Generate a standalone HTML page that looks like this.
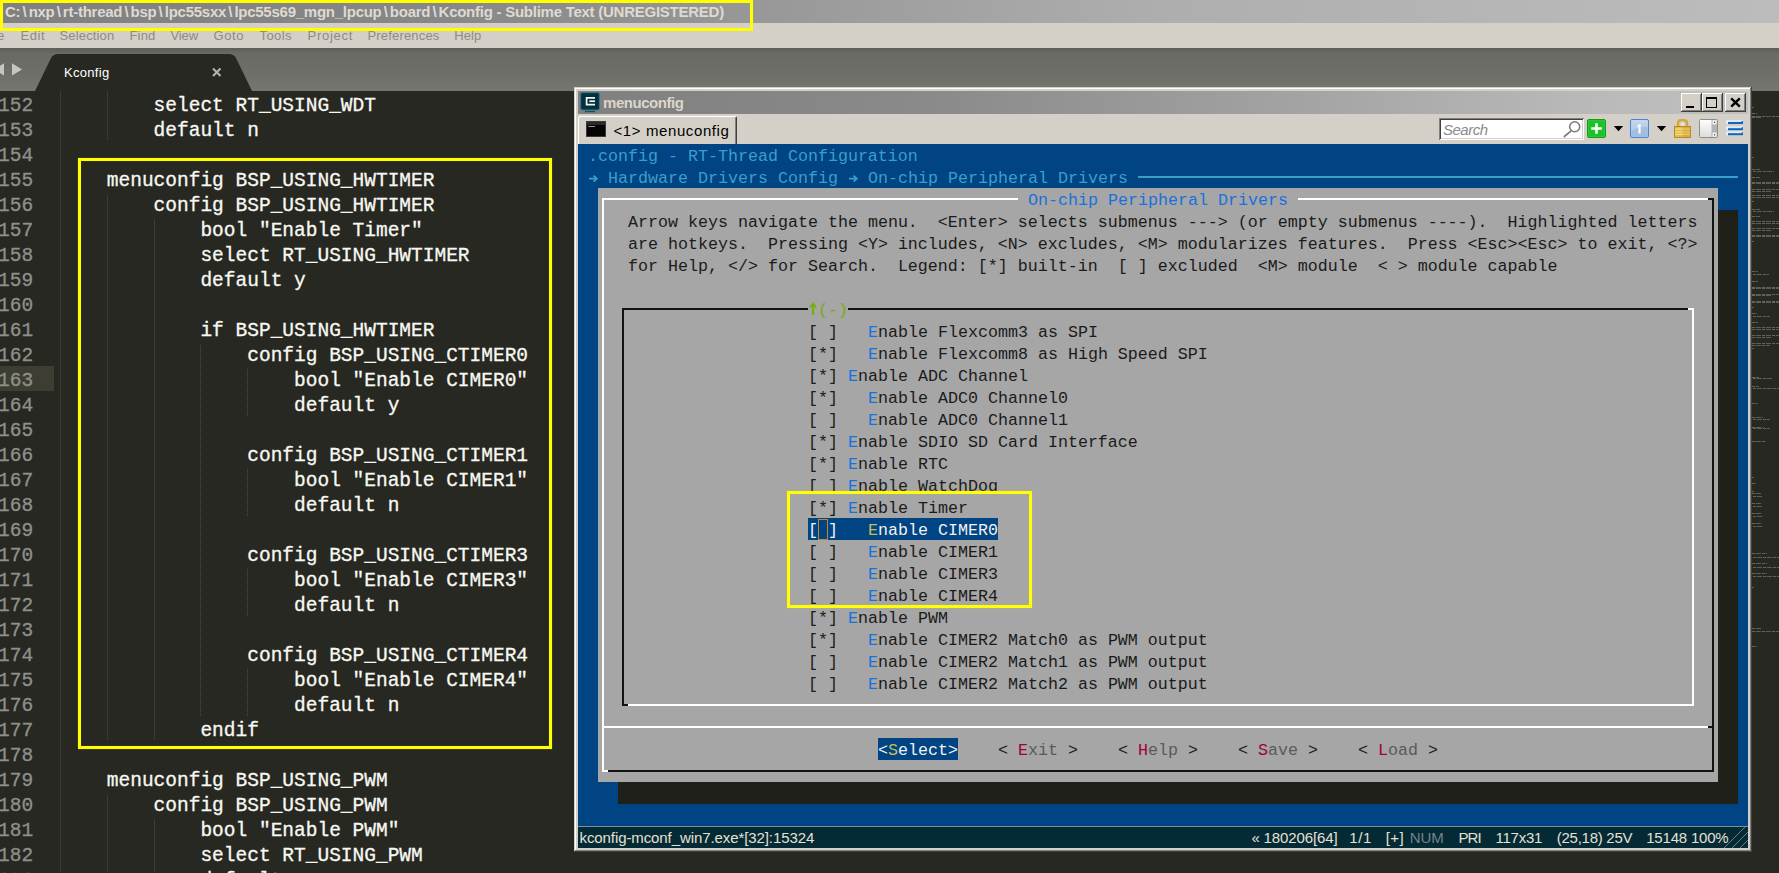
<!DOCTYPE html>
<html><head><meta charset="utf-8"><title>Kconfig</title>
<style>
*{margin:0;padding:0;box-sizing:border-box}
html,body{width:1779px;height:873px;overflow:hidden;background:#272822}
body{position:relative;font-family:"Liberation Sans",sans-serif}
.a{position:absolute}
#title{left:0;top:0;width:1779px;height:23px;background:linear-gradient(90deg,#808080 0%,#878787 25%,#9a9a9a 45%,#aeaeae 65%,#bcbcbc 100%)}
#menubar{left:0;top:23px;width:1779px;height:25px;background:#d4d0c8}
#menubar span{position:absolute;top:5px;font:13px "Liberation Sans",sans-serif;color:#8c8a84;white-space:pre}
#tabbar{left:0;top:48px;width:1779px;height:43px;background:linear-gradient(180deg,#5d5e58 0%,#696a64 12%,#6e6f69 60%,#757670 100%)}
#editor{left:0;top:91px;width:1779px;height:782px;background:#272822}
.ln{position:absolute;left:-2px;width:60px;height:25px;font:19.5px/25px "Liberation Mono",monospace;color:#8f908a;white-space:pre;-webkit-text-stroke:0.3px #8f908a}
.cl{position:absolute;left:60px;height:25px;font:19.5px/25px "Liberation Mono",monospace;color:#f8f8f2;white-space:pre;-webkit-text-stroke:0.3px #f8f8f2}
.ig{position:absolute;width:1px;background-image:linear-gradient(180deg,#4b4c45 50%,transparent 50%);background-size:1px 2px}
.mm{position:absolute;height:1px;background:repeating-linear-gradient(90deg,rgba(215,215,205,.34) 0,rgba(215,215,205,.34) 3px,rgba(215,215,205,.08) 3px,rgba(215,215,205,.08) 4px,rgba(215,215,205,.3) 4px,rgba(215,215,205,.3) 9px,transparent 9px,transparent 10px)}
.yb{position:absolute;border:3.4px solid #ffff00;box-shadow:0 0 0.7px #e8e800, inset 0 0 0.7px #e8e800}
#term{left:578px;top:144px;width:1170px;height:682px;background:#004484;overflow:hidden}
.t{position:absolute;height:22px;font:16.664px/22px "Liberation Mono",monospace;white-space:pre;color:#1b1b1b}
.c1{color:#3a9fc8}
.bl{color:#1872dc}
.gr{color:#72b008}
.rd{color:#a2003a}
.dg{color:#5a5a5a}
.wh{color:#f2f2f2}
.yl{color:#c4bc58}
#cstatus{left:578px;top:826px;width:1170px;height:22px;background:#042a35;border-top:1px solid #7d8d9c}
#cstatus span{position:absolute;top:2px;font:15px "Liberation Sans",sans-serif;color:#e6e0d4;white-space:pre}
</style></head>
<body>
<div id="title" class="a"><span class="a" style="left:5px;top:3px;font:bold 15px 'Liberation Sans',sans-serif;color:#dedad2;white-space:pre;letter-spacing:-0.254px">C:<span style="margin:0 2.20px">\</span>nxp<span style="margin:0 2.20px">\</span>rt-thread<span style="margin:0 2.20px">\</span>bsp<span style="margin:0 2.20px">\</span>lpc55sxx<span style="margin:0 2.20px">\</span>lpc55s69_mgn_lpcup<span style="margin:0 2.20px">\</span>board<span style="margin:0 2.20px">\</span>Kconfig - Sublime Text (UNREGISTERED)</span></div>
<div id="menubar" class="a"><span style="left:-3.0px">e</span><span style="left:20.6px;letter-spacing:0.500px">Edit</span><span style="left:59.5px;letter-spacing:0.158px">Selection</span><span style="left:129.5px;letter-spacing:0.177px">Find</span><span style="left:170.5px;letter-spacing:-0.111px">View</span><span style="left:213.5px;letter-spacing:0.579px">Goto</span><span style="left:259.5px;letter-spacing:0.430px">Tools</span><span style="left:307.5px;letter-spacing:0.720px">Project</span><span style="left:367.5px;letter-spacing:0.173px">Preferences</span><span style="left:454.3px;letter-spacing:0.091px">Help</span></div>
<div class="yb" style="left:0;top:0;width:753px;height:30.5px"></div>
<div id="tabbar" class="a"><svg class="a" style="left:0;top:0" width="300" height="43" viewBox="0 0 300 43"><path d="M35 43 L50.8 10.5 Q52.8 6 58.3 6 L228.7 6 Q234.2 6 236.2 10.5 L252 43 Z" fill="#272822"/><path d="M4 15.2 L4 27.6 L-6 21.4 Z" fill="#c6c6c2"/><path d="M12 15.2 L22 21.4 L12 27.6 Z" fill="#c6c6c2"/><path d="M213 20.5 L220.5 28 M220.5 20.5 L213 28" stroke="#b4b4b0" stroke-width="2.1" fill="none"/></svg><span class="a" style="left:64px;top:16.5px;font:13px 'Liberation Sans',sans-serif;color:#ffffff;letter-spacing:0.305px">Kconfig</span></div>
<div id="editor" class="a"><div class="a" style="left:0;top:275px;width:54px;height:25px;background:#3e3d32"></div><div class="ig" style="left:60px;top:0px;height:25px;background-position:0 0px"></div><div class="ig" style="left:107px;top:0px;height:25px;background-position:0 0px"></div><div class="ig" style="left:60px;top:25px;height:25px;background-position:0 -1px"></div><div class="ig" style="left:107px;top:25px;height:25px;background-position:0 -1px"></div><div class="ig" style="left:60px;top:50px;height:25px;background-position:0 0px"></div><div class="ig" style="left:60px;top:75px;height:25px;background-position:0 -1px"></div><div class="ig" style="left:60px;top:100px;height:25px;background-position:0 0px"></div><div class="ig" style="left:107px;top:103px;height:22px;background-position:0 -1px"></div><div class="ig" style="left:60px;top:125px;height:25px;background-position:0 -1px"></div><div class="ig" style="left:107px;top:125px;height:25px;background-position:0 -1px"></div><div class="ig" style="left:154px;top:128px;height:22px;background-position:0 0px"></div><div class="ig" style="left:60px;top:150px;height:25px;background-position:0 0px"></div><div class="ig" style="left:107px;top:150px;height:25px;background-position:0 0px"></div><div class="ig" style="left:154px;top:150px;height:25px;background-position:0 0px"></div><div class="ig" style="left:60px;top:175px;height:25px;background-position:0 -1px"></div><div class="ig" style="left:107px;top:175px;height:25px;background-position:0 -1px"></div><div class="ig" style="left:154px;top:175px;height:25px;background-position:0 -1px"></div><div class="ig" style="left:60px;top:200px;height:25px;background-position:0 0px"></div><div class="ig" style="left:107px;top:200px;height:25px;background-position:0 0px"></div><div class="ig" style="left:154px;top:200px;height:25px;background-position:0 0px"></div><div class="ig" style="left:60px;top:225px;height:25px;background-position:0 -1px"></div><div class="ig" style="left:107px;top:225px;height:25px;background-position:0 -1px"></div><div class="ig" style="left:154px;top:225px;height:25px;background-position:0 -1px"></div><div class="ig" style="left:60px;top:250px;height:25px;background-position:0 0px"></div><div class="ig" style="left:107px;top:250px;height:25px;background-position:0 0px"></div><div class="ig" style="left:154px;top:250px;height:25px;background-position:0 0px"></div><div class="ig" style="left:200px;top:253px;height:22px;background-position:0 -1px"></div><div class="ig" style="left:60px;top:275px;height:25px;background-position:0 -1px"></div><div class="ig" style="left:107px;top:275px;height:25px;background-position:0 -1px"></div><div class="ig" style="left:154px;top:275px;height:25px;background-position:0 -1px"></div><div class="ig" style="left:200px;top:275px;height:25px;background-position:0 -1px"></div><div class="ig" style="left:247px;top:278px;height:22px;background-position:0 0px"></div><div class="ig" style="left:60px;top:300px;height:25px;background-position:0 0px"></div><div class="ig" style="left:107px;top:300px;height:25px;background-position:0 0px"></div><div class="ig" style="left:154px;top:300px;height:25px;background-position:0 0px"></div><div class="ig" style="left:200px;top:300px;height:25px;background-position:0 0px"></div><div class="ig" style="left:247px;top:300px;height:25px;background-position:0 0px"></div><div class="ig" style="left:60px;top:325px;height:25px;background-position:0 -1px"></div><div class="ig" style="left:107px;top:325px;height:25px;background-position:0 -1px"></div><div class="ig" style="left:154px;top:325px;height:25px;background-position:0 -1px"></div><div class="ig" style="left:200px;top:325px;height:25px;background-position:0 -1px"></div><div class="ig" style="left:60px;top:350px;height:25px;background-position:0 0px"></div><div class="ig" style="left:107px;top:350px;height:25px;background-position:0 0px"></div><div class="ig" style="left:154px;top:350px;height:25px;background-position:0 0px"></div><div class="ig" style="left:200px;top:350px;height:25px;background-position:0 0px"></div><div class="ig" style="left:60px;top:375px;height:25px;background-position:0 -1px"></div><div class="ig" style="left:107px;top:375px;height:25px;background-position:0 -1px"></div><div class="ig" style="left:154px;top:375px;height:25px;background-position:0 -1px"></div><div class="ig" style="left:200px;top:375px;height:25px;background-position:0 -1px"></div><div class="ig" style="left:247px;top:378px;height:22px;background-position:0 0px"></div><div class="ig" style="left:60px;top:400px;height:25px;background-position:0 0px"></div><div class="ig" style="left:107px;top:400px;height:25px;background-position:0 0px"></div><div class="ig" style="left:154px;top:400px;height:25px;background-position:0 0px"></div><div class="ig" style="left:200px;top:400px;height:25px;background-position:0 0px"></div><div class="ig" style="left:247px;top:400px;height:25px;background-position:0 0px"></div><div class="ig" style="left:60px;top:425px;height:25px;background-position:0 -1px"></div><div class="ig" style="left:107px;top:425px;height:25px;background-position:0 -1px"></div><div class="ig" style="left:154px;top:425px;height:25px;background-position:0 -1px"></div><div class="ig" style="left:200px;top:425px;height:25px;background-position:0 -1px"></div><div class="ig" style="left:60px;top:450px;height:25px;background-position:0 0px"></div><div class="ig" style="left:107px;top:450px;height:25px;background-position:0 0px"></div><div class="ig" style="left:154px;top:450px;height:25px;background-position:0 0px"></div><div class="ig" style="left:200px;top:450px;height:25px;background-position:0 0px"></div><div class="ig" style="left:60px;top:475px;height:25px;background-position:0 -1px"></div><div class="ig" style="left:107px;top:475px;height:25px;background-position:0 -1px"></div><div class="ig" style="left:154px;top:475px;height:25px;background-position:0 -1px"></div><div class="ig" style="left:200px;top:475px;height:25px;background-position:0 -1px"></div><div class="ig" style="left:247px;top:478px;height:22px;background-position:0 0px"></div><div class="ig" style="left:60px;top:500px;height:25px;background-position:0 0px"></div><div class="ig" style="left:107px;top:500px;height:25px;background-position:0 0px"></div><div class="ig" style="left:154px;top:500px;height:25px;background-position:0 0px"></div><div class="ig" style="left:200px;top:500px;height:25px;background-position:0 0px"></div><div class="ig" style="left:247px;top:500px;height:25px;background-position:0 0px"></div><div class="ig" style="left:60px;top:525px;height:25px;background-position:0 -1px"></div><div class="ig" style="left:107px;top:525px;height:25px;background-position:0 -1px"></div><div class="ig" style="left:154px;top:525px;height:25px;background-position:0 -1px"></div><div class="ig" style="left:200px;top:525px;height:25px;background-position:0 -1px"></div><div class="ig" style="left:60px;top:550px;height:25px;background-position:0 0px"></div><div class="ig" style="left:107px;top:550px;height:25px;background-position:0 0px"></div><div class="ig" style="left:154px;top:550px;height:25px;background-position:0 0px"></div><div class="ig" style="left:200px;top:550px;height:25px;background-position:0 0px"></div><div class="ig" style="left:60px;top:575px;height:25px;background-position:0 -1px"></div><div class="ig" style="left:107px;top:575px;height:25px;background-position:0 -1px"></div><div class="ig" style="left:154px;top:575px;height:25px;background-position:0 -1px"></div><div class="ig" style="left:200px;top:575px;height:25px;background-position:0 -1px"></div><div class="ig" style="left:247px;top:578px;height:22px;background-position:0 0px"></div><div class="ig" style="left:60px;top:600px;height:25px;background-position:0 0px"></div><div class="ig" style="left:107px;top:600px;height:25px;background-position:0 0px"></div><div class="ig" style="left:154px;top:600px;height:25px;background-position:0 0px"></div><div class="ig" style="left:200px;top:600px;height:25px;background-position:0 0px"></div><div class="ig" style="left:247px;top:600px;height:25px;background-position:0 0px"></div><div class="ig" style="left:60px;top:625px;height:25px;background-position:0 -1px"></div><div class="ig" style="left:107px;top:625px;height:25px;background-position:0 -1px"></div><div class="ig" style="left:154px;top:625px;height:25px;background-position:0 -1px"></div><div class="ig" style="left:60px;top:650px;height:25px;background-position:0 0px"></div><div class="ig" style="left:60px;top:675px;height:25px;background-position:0 -1px"></div><div class="ig" style="left:60px;top:700px;height:25px;background-position:0 0px"></div><div class="ig" style="left:107px;top:703px;height:22px;background-position:0 -1px"></div><div class="ig" style="left:60px;top:725px;height:25px;background-position:0 -1px"></div><div class="ig" style="left:107px;top:725px;height:25px;background-position:0 -1px"></div><div class="ig" style="left:154px;top:728px;height:22px;background-position:0 0px"></div><div class="ig" style="left:60px;top:750px;height:25px;background-position:0 0px"></div><div class="ig" style="left:107px;top:750px;height:25px;background-position:0 0px"></div><div class="ig" style="left:154px;top:750px;height:25px;background-position:0 0px"></div><div class="ig" style="left:60px;top:775px;height:25px;background-position:0 -1px"></div><div class="ig" style="left:107px;top:775px;height:25px;background-position:0 -1px"></div><div class="ig" style="left:154px;top:775px;height:25px;background-position:0 -1px"></div><div class="ln" style="top:3px">152</div><div class="cl" style="top:3px">        select RT_USING_WDT</div><div class="ln" style="top:28px">153</div><div class="cl" style="top:28px">        default n</div><div class="ln" style="top:53px">154</div><div class="ln" style="top:78px">155</div><div class="cl" style="top:78px">    menuconfig BSP_USING_HWTIMER</div><div class="ln" style="top:103px">156</div><div class="cl" style="top:103px">        config BSP_USING_HWTIMER</div><div class="ln" style="top:128px">157</div><div class="cl" style="top:128px">            bool "Enable Timer"</div><div class="ln" style="top:153px">158</div><div class="cl" style="top:153px">            select RT_USING_HWTIMER</div><div class="ln" style="top:178px">159</div><div class="cl" style="top:178px">            default y</div><div class="ln" style="top:203px">160</div><div class="ln" style="top:228px">161</div><div class="cl" style="top:228px">            if BSP_USING_HWTIMER</div><div class="ln" style="top:253px">162</div><div class="cl" style="top:253px">                config BSP_USING_CTIMER0</div><div class="ln" style="top:278px">163</div><div class="cl" style="top:278px">                    bool "Enable CIMER0"</div><div class="ln" style="top:303px">164</div><div class="cl" style="top:303px">                    default y</div><div class="ln" style="top:328px">165</div><div class="ln" style="top:353px">166</div><div class="cl" style="top:353px">                config BSP_USING_CTIMER1</div><div class="ln" style="top:378px">167</div><div class="cl" style="top:378px">                    bool "Enable CIMER1"</div><div class="ln" style="top:403px">168</div><div class="cl" style="top:403px">                    default n</div><div class="ln" style="top:428px">169</div><div class="ln" style="top:453px">170</div><div class="cl" style="top:453px">                config BSP_USING_CTIMER3</div><div class="ln" style="top:478px">171</div><div class="cl" style="top:478px">                    bool "Enable CIMER3"</div><div class="ln" style="top:503px">172</div><div class="cl" style="top:503px">                    default n</div><div class="ln" style="top:528px">173</div><div class="ln" style="top:553px">174</div><div class="cl" style="top:553px">                config BSP_USING_CTIMER4</div><div class="ln" style="top:578px">175</div><div class="cl" style="top:578px">                    bool "Enable CIMER4"</div><div class="ln" style="top:603px">176</div><div class="cl" style="top:603px">                    default n</div><div class="ln" style="top:628px">177</div><div class="cl" style="top:628px">            endif</div><div class="ln" style="top:653px">178</div><div class="ln" style="top:678px">179</div><div class="cl" style="top:678px">    menuconfig BSP_USING_PWM</div><div class="ln" style="top:703px">180</div><div class="cl" style="top:703px">        config BSP_USING_PWM</div><div class="ln" style="top:728px">181</div><div class="cl" style="top:728px">            bool "Enable PWM"</div><div class="ln" style="top:753px">182</div><div class="cl" style="top:753px">            select RT_USING_PWM</div><div class="ln" style="top:778px">183</div><div class="cl" style="top:778px">            default n</div><div class="mm" style="left:1752px;top:16px;width:2px"></div><div class="mm" style="left:1752px;top:22px;width:5px"></div><div class="mm" style="left:1752px;top:25px;width:27px"></div><div class="mm" style="left:1752px;top:26px;width:10px"></div><div class="mm" style="left:1752px;top:66px;width:2px"></div><div class="mm" style="left:1752px;top:78px;width:8px"></div><div class="mm" style="left:1753px;top:80px;width:21px"></div><div class="mm" style="left:1752px;top:86px;width:8px"></div><div class="mm" style="left:1752px;top:91px;width:27px"></div><div class="mm" style="left:1752px;top:92px;width:27px"></div><div class="mm" style="left:1752px;top:98px;width:27px"></div><div class="mm" style="left:1752px;top:100px;width:19px"></div><div class="mm" style="left:1752px;top:104px;width:27px"></div><div class="mm" style="left:1752px;top:106px;width:27px"></div><div class="mm" style="left:1752px;top:110px;width:2px"></div><div class="mm" style="left:1752px;top:118px;width:8px"></div><div class="mm" style="left:1753px;top:120px;width:21px"></div><div class="mm" style="left:1752px;top:125px;width:8px"></div><div class="mm" style="left:1752px;top:130px;width:27px"></div><div class="mm" style="left:1752px;top:132px;width:27px"></div><div class="mm" style="left:1752px;top:137px;width:27px"></div><div class="mm" style="left:1752px;top:139px;width:19px"></div><div class="mm" style="left:1752px;top:144px;width:27px"></div><div class="mm" style="left:1752px;top:145px;width:27px"></div><div class="mm" style="left:1752px;top:150px;width:2px"></div><div class="mm" style="left:1752px;top:180px;width:6px"></div><div class="mm" style="left:1753px;top:183px;width:16px"></div><div class="mm" style="left:1752px;top:190px;width:6px"></div><div class="mm" style="left:1752px;top:196px;width:27px"></div><div class="mm" style="left:1752px;top:197px;width:27px"></div><div class="mm" style="left:1752px;top:203px;width:27px"></div><div class="mm" style="left:1752px;top:204px;width:19px"></div><div class="mm" style="left:1752px;top:210px;width:27px"></div><div class="mm" style="left:1752px;top:211px;width:27px"></div><div class="mm" style="left:1752px;top:216px;width:2px"></div><div class="mm" style="left:1752px;top:222px;width:5px"></div><div class="mm" style="left:1753px;top:225px;width:17px"></div><div class="mm" style="left:1752px;top:231px;width:6px"></div><div class="mm" style="left:1752px;top:236px;width:27px"></div><div class="mm" style="left:1752px;top:238px;width:27px"></div><div class="mm" style="left:1752px;top:244px;width:27px"></div><div class="mm" style="left:1752px;top:246px;width:19px"></div><div class="mm" style="left:1752px;top:252px;width:27px"></div><div class="mm" style="left:1752px;top:254px;width:18px"></div><div class="mm" style="left:1752px;top:257px;width:2px"></div><div class="mm" style="left:1752px;top:286px;width:7px"></div><div class="mm" style="left:1753px;top:287px;width:20px"></div><div class="mm" style="left:1752px;top:295px;width:7px"></div><div class="mm" style="left:1753px;top:297px;width:26px"></div><div class="mm" style="left:1752px;top:312px;width:6px"></div><div class="mm" style="left:1752px;top:326px;width:11px"></div><div class="mm" style="left:1753px;top:328px;width:17px"></div><div class="mm" style="left:1752px;top:336px;width:11px"></div><div class="mm" style="left:1753px;top:337px;width:17px"></div><div class="mm" style="left:1752px;top:350px;width:14px"></div><div class="mm" style="left:1752px;top:386px;width:2px"></div><div class="mm" style="left:1752px;top:392px;width:4px"></div><div class="mm" style="left:1752px;top:400px;width:2px"></div><div class="mm" style="left:1752px;top:402px;width:10px"></div><div class="mm" style="left:1753px;top:405px;width:9px"></div><div class="mm" style="left:1752px;top:412px;width:10px"></div><div class="mm" style="left:1753px;top:415px;width:9px"></div><div class="mm" style="left:1752px;top:422px;width:10px"></div><div class="mm" style="left:1753px;top:425px;width:9px"></div><div class="mm" style="left:1752px;top:432px;width:10px"></div><div class="mm" style="left:1753px;top:435px;width:9px"></div><div class="mm" style="left:1752px;top:462px;width:15px"></div><div class="mm" style="left:1753px;top:466px;width:26px"></div><div class="mm" style="left:1752px;top:472px;width:15px"></div><div class="mm" style="left:1753px;top:476px;width:26px"></div><div class="mm" style="left:1752px;top:482px;width:15px"></div><div class="mm" style="left:1753px;top:485px;width:26px"></div><div class="mm" style="left:1752px;top:496px;width:2px"></div><div class="mm" style="left:1752px;top:537px;width:9px"></div><div class="mm" style="left:1752px;top:540px;width:27px"></div><div class="mm" style="left:1752px;top:555px;width:5px"></div></div>
<div class="yb" style="left:78px;top:158px;width:474.3px;height:591px"></div>
<div class="a" style="left:574px;top:87px;width:1178px;height:765px;background:#d4d0c8;box-shadow:inset -1px -1px 0 #404040, inset 1px 1px 0 #d4d0c8, inset -2px -2px 0 #808080, inset 2px 2px 0 #ffffff"></div>
<div class="a" style="left:578px;top:91px;width:1170px;height:23px;background:linear-gradient(90deg,#808080 0%,#8a8a8a 30%,#a2a2a2 60%,#b8b8b8 85%,#c0c0c0 100%)"></div>
<svg class="a" style="left:580px;top:92px" width="20" height="21" viewBox="0 0 20 21"><rect x="0.5" y="0.5" width="19" height="17.5" rx="2.2" fill="#03303e" stroke="#3a7686" stroke-width="1"/><rect x="1.6" y="1.6" width="16.8" height="15.3" rx="1.2" fill="none" stroke="#0a4252" stroke-width="0.8"/><path d="M15 5.8 L6.6 5.8 L6.6 12.6 L15 12.6" fill="none" stroke="#f6f6f2" stroke-width="1.7"/><path d="M9.4 9.2 L15 9.2" stroke="#f6f6f2" stroke-width="1.7"/><rect x="5" y="19" width="10" height="1.2" fill="#165060"/></svg>
<span class="a" style="left:603px;top:93.5px;font:bold 15px 'Liberation Sans',sans-serif;color:#dcd6ca;white-space:pre;letter-spacing:-0.450px">menuconfig</span>
<div class="a" style="left:1681px;top:93px;width:21px;height:19px;background:#d4d0c8;box-shadow:inset -1px -1px 0 #404040, inset 1px 1px 0 #ffffff, inset -2px -2px 0 #808080"></div><div class="a" style="left:1686px;top:106px;width:8px;height:2px;background:#000"></div><div class="a" style="left:1702px;top:93px;width:21px;height:19px;background:#d4d0c8;box-shadow:inset -1px -1px 0 #404040, inset 1px 1px 0 #ffffff, inset -2px -2px 0 #808080"></div><div class="a" style="left:1706px;top:97px;width:11px;height:11px;border:1px solid #000;border-top-width:2px"></div><div class="a" style="left:1725px;top:93px;width:21px;height:19px;background:#d4d0c8;box-shadow:inset -1px -1px 0 #404040, inset 1px 1px 0 #ffffff, inset -2px -2px 0 #808080"></div><svg class="a" style="left:1729px;top:96px" width="13" height="13" viewBox="0 0 13 13"><path d="M2.2 2.4 L10.8 10.6 M10.8 2.4 L2.2 10.6" stroke="#000" stroke-width="2.4" fill="none"/></svg>
<div class="a" style="left:578px;top:114px;width:1170px;height:30px;background:#d4d0c8"></div>
<div class="a" style="left:578px;top:116px;width:159px;height:28px;background:#d4d0c8;border-top:1px solid #fff;border-left:1px solid #fff;border-right:1px solid #404040;border-radius:3px 2px 0 0;box-shadow:inset -1px 0 0 #808080"></div>
<svg class="a" style="left:586px;top:121px" width="20" height="16" viewBox="0 0 20 16"><rect x="0" y="0" width="20" height="16" fill="#050505"/><rect x="0.5" y="0.5" width="19" height="15" fill="none" stroke="#3a3a3a" stroke-width="1"/><rect x="1" y="1" width="18" height="3" fill="#2a2a2a"/><path d="M2.5 5.5 L9 5.5" stroke="#9a9a9a" stroke-width="1"/></svg>
<span class="a" style="left:613.5px;top:122px;font:15px 'Liberation Sans',sans-serif;color:#000;white-space:pre;letter-spacing:0.601px">&lt;1&gt; menuconfig</span>
<div class="a" style="left:1439px;top:118px;width:145px;height:22px;background:#fff;box-shadow:inset 1px 1px 0 #808080, inset -1px -1px 0 #ffffff, inset 2px 2px 0 #404040, inset -2px -2px 0 #d4d0c8"></div><span class="a" style="left:1443px;top:120.5px;font:italic 15px 'Liberation Sans',sans-serif;color:#8a8a8a;letter-spacing:-0.505px">Search</span><svg class="a" style="left:1560px;top:118px" width="24" height="22" viewBox="0 0 24 22"><circle cx="14.7" cy="8.8" r="5" fill="#fff" stroke="#7a7a7a" stroke-width="1.5"/><path d="M11 12.8 L3.8 19" stroke="#7a7a7a" stroke-width="1.7"/></svg>
<svg class="a" style="left:1587px;top:119px" width="19" height="19" viewBox="0 0 19 19"><rect x="0.5" y="0.5" width="18" height="18" rx="1.5" fill="#1fc02a" stroke="#169a20"/><rect x="1.5" y="1.5" width="16" height="16" fill="none" stroke="#2ad438" stroke-width="1" opacity=".6"/><path d="M9.5 4.2 L9.5 14.8 M4.2 9.5 L14.8 9.5" stroke="#f4fff4" stroke-width="2.7"/></svg><svg class="a" style="left:1613px;top:125px" width="11" height="7" viewBox="0 0 11 7"><path d="M0.8 1 L10.2 1 L5.5 6.2 Z" fill="#000"/></svg><svg class="a" style="left:1630px;top:119px" width="19" height="19" viewBox="0 0 19 19"><defs><linearGradient id="g1" x1="0" y1="0" x2="0" y2="1"><stop offset="0" stop-color="#c4d8ee"/><stop offset="1" stop-color="#a4c2e2"/></linearGradient></defs><rect x="0.5" y="0.5" width="18" height="18" rx="1.5" fill="url(#g1)" stroke="#4a86d0"/><path d="M1.5 12 L9 8 L17.5 8 L17.5 17.5 L1.5 17.5 Z" fill="#9ebcde" opacity=".8"/><path d="M7 7 L9.6 5 L10.6 5 L10.6 14.5 L8.4 14.5 L8.4 7.6 L7 8.4 Z" fill="#fdfdff"/></svg><svg class="a" style="left:1656px;top:125px" width="11" height="7" viewBox="0 0 11 7"><path d="M0.8 1 L10.2 1 L5.5 6.2 Z" fill="#000"/></svg><svg class="a" style="left:1674px;top:119px" width="17" height="19" viewBox="0 0 17 19"><path d="M4 8 L4 4.2 Q4 1 8.5 1 Q13 1 13 4.2 L13 8" fill="none" stroke="#d2a83c" stroke-width="2.6"/><rect x="7.2" y="3.8" width="2.8" height="3" fill="#e8e4dc"/><rect x="0.5" y="7.5" width="16" height="11" fill="#e2b848" stroke="#b88a20"/><path d="M1 10.2 L16 10.2 M1 12.8 L16 12.8 M1 15.4 L16 15.4" stroke="#f4dc88" stroke-width="1.2"/><rect x="8.5" y="8" width="7.5" height="10" fill="#b08018" opacity=".22"/></svg><svg class="a" style="left:1699px;top:119px" width="19" height="19" viewBox="0 0 19 19"><defs><linearGradient id="g2" x1="0" y1="0" x2="0" y2="1"><stop offset="0" stop-color="#ffffff"/><stop offset="1" stop-color="#dcdcdc"/></linearGradient></defs><rect x="0.5" y="0.5" width="18" height="18" rx="1" fill="url(#g2)" stroke="#8c8c8c"/><rect x="12.5" y="1" width="5.5" height="17" fill="#b4b4b4"/><rect x="13.5" y="1.2" width="4.2" height="4.2" fill="#f4f4f4"/><rect x="13.5" y="13.6" width="4.2" height="4.2" fill="#f4f4f4"/><rect x="15" y="2.8" width="1.2" height="1.2" fill="#444"/><rect x="15" y="15.2" width="1.2" height="1.2" fill="#444"/></svg><svg class="a" style="left:1726px;top:119px" width="18" height="19" viewBox="0 0 18 19"><rect x="0" y="1.0" width="17" height="4" fill="#dcecfa"/><rect x="2" y="3.0" width="15" height="2" fill="#1464b8"/><rect x="15.5" y="2.2" width="1.5" height="1" fill="#0c4c98"/><rect x="0" y="7.2" width="17" height="4" fill="#dcecfa"/><rect x="2" y="9.2" width="15" height="2" fill="#1464b8"/><rect x="15.5" y="8.4" width="1.5" height="1" fill="#0c4c98"/><rect x="0" y="12.2" width="17" height="4" fill="#dcecfa"/><rect x="2" y="14.2" width="15" height="2" fill="#1464b8"/><rect x="15.5" y="13.4" width="1.5" height="1" fill="#0c4c98"/></svg>
<div id="term" class="a"><div class="a" style="left:40px;top:638px;width:1120px;height:22px;background:#20201b"></div><div class="a" style="left:1140px;top:66px;width:20px;height:594px;background:#20201b"></div><div class="a" style="left:20px;top:44px;width:1120px;height:594px;background:#a6a6a6"></div><div class="t c1" style="left:10px;top:2px">.config - RT-Thread Configuration</div><svg style="position:absolute;left:10px;top:22px" width="10" height="22" viewBox="0 0 10 22"><path d="M1 12.6 L8.6 12.6 M5.6 9.6 L8.8 12.6 L5.6 15.6" fill="none" stroke="#3a9fc8" stroke-width="1.8"/></svg><svg style="position:absolute;left:270px;top:22px" width="10" height="22" viewBox="0 0 10 22"><path d="M1 12.6 L8.6 12.6 M5.6 9.6 L8.8 12.6 L5.6 15.6" fill="none" stroke="#3a9fc8" stroke-width="1.8"/></svg><div class="t c1" style="left:30px;top:24px">Hardware Drivers Config</div><div class="t c1" style="left:290px;top:24px">On-chip Peripheral Drivers</div><div class="a" style="left:560px;top:32px;width:600px;height:2px;background:#3a9fc8"></div><div class="a" style="left:24px;top:54px;width:416px;height:2px;background:#ffffff"></div><div class="a" style="left:720px;top:54px;width:410px;height:2px;background:#ffffff"></div><div class="a" style="left:1130px;top:54px;width:6px;height:2px;background:#12120e"></div><div class="a" style="left:24px;top:54px;width:2px;height:574px;background:#ffffff"></div><div class="a" style="left:1134px;top:54px;width:2px;height:574px;background:#12120e"></div><div class="a" style="left:24px;top:626px;width:6px;height:2px;background:#ffffff"></div><div class="a" style="left:30px;top:626px;width:1106px;height:2px;background:#12120e"></div><div class="a" style="left:24px;top:582px;width:1106px;height:2px;background:#ffffff"></div><div class="a" style="left:1130px;top:582px;width:6px;height:2px;background:#12120e"></div><div class="a" style="left:44px;top:164px;width:186px;height:2px;background:#12120e"></div><div class="a" style="left:270px;top:164px;width:840px;height:2px;background:#12120e"></div><div class="a" style="left:1110px;top:164px;width:6px;height:2px;background:#ffffff"></div><div class="a" style="left:44px;top:164px;width:2px;height:398px;background:#12120e"></div><div class="a" style="left:1114px;top:164px;width:2px;height:398px;background:#ffffff"></div><div class="a" style="left:44px;top:560px;width:6px;height:2px;background:#12120e"></div><div class="a" style="left:50px;top:560px;width:1066px;height:2px;background:#ffffff"></div><div class="t bl" style="left:450px;top:46px">On-chip Peripheral Drivers</div><div class="t " style="left:50px;top:68px">Arrow keys navigate the menu.  &lt;Enter&gt; selects submenus ---&gt; (or empty submenus ----).  Highlighted letters</div><div class="t " style="left:50px;top:90px">are hotkeys.  Pressing &lt;Y&gt; includes, &lt;N&gt; excludes, &lt;M&gt; modularizes features.  Press &lt;Esc&gt;&lt;Esc&gt; to exit, &lt;?&gt;</div><div class="t " style="left:50px;top:112px">for Help, &lt;/&gt; for Search.  Legend: [*] built-in  [ ] excluded  &lt;M&gt; module  &lt; &gt; module capable</div><svg style="position:absolute;left:230px;top:154px" width="10" height="22" viewBox="0 0 10 22"><path d="M5.1 17 L5.1 6" fill="none" stroke="#72b008" stroke-width="2.1"/><path d="M2 9.4 L5.1 5.4 L8.2 9.4" fill="none" stroke="#72b008" stroke-width="1.7"/></svg><div class="t gr" style="left:240px;top:156px">(-)</div><div class="t " style="left:230px;top:178px">[ ]   <span class="bl">E</span>nable Flexcomm3 as SPI</div><div class="t " style="left:230px;top:200px">[*]   <span class="bl">E</span>nable Flexcomm8 as High Speed SPI</div><div class="t " style="left:230px;top:222px">[*] <span class="bl">E</span>nable ADC Channel</div><div class="t " style="left:230px;top:244px">[*]   <span class="bl">E</span>nable ADC0 Channel0</div><div class="t " style="left:230px;top:266px">[ ]   <span class="bl">E</span>nable ADC0 Channel1</div><div class="t " style="left:230px;top:288px">[*] <span class="bl">E</span>nable SDIO SD Card Interface</div><div class="t " style="left:230px;top:310px">[*] <span class="bl">E</span>nable RTC</div><div class="t " style="left:230px;top:332px">[ ] <span class="bl">E</span>nable WatchDog</div><div class="t " style="left:230px;top:354px">[*] <span class="bl">E</span>nable Timer</div><div class="a" style="left:230px;top:374px;width:190px;height:22px;background:#004484"></div><div class="a" style="left:240px;top:375px;width:10px;height:21px;border:1px solid #c4842e"></div><div class="t " style="left:230px;top:376px"><span class="wh">[ ]   </span><span class="yl">E</span><span class="wh">nable CIMER0</span></div><div class="t " style="left:230px;top:398px">[ ]   <span class="bl">E</span>nable CIMER1</div><div class="t " style="left:230px;top:420px">[ ]   <span class="bl">E</span>nable CIMER3</div><div class="t " style="left:230px;top:442px">[ ]   <span class="bl">E</span>nable CIMER4</div><div class="t " style="left:230px;top:464px">[*] <span class="bl">E</span>nable PWM</div><div class="t " style="left:230px;top:486px">[*]   <span class="bl">E</span>nable CIMER2 Match0 as PWM output</div><div class="t " style="left:230px;top:508px">[ ]   <span class="bl">E</span>nable CIMER2 Match1 as PWM output</div><div class="t " style="left:230px;top:530px">[ ]   <span class="bl">E</span>nable CIMER2 Match2 as PWM output</div><div class="a" style="left:300px;top:594px;width:80px;height:22px;background:#004484"></div><div class="t " style="left:300px;top:596px"><span class="wh">&lt;</span><span class="yl">S</span><span class="wh">elect&gt;</span></div><div class="t " style="left:420px;top:596px">&lt; <span class="rd">E</span><span class="dg">xit</span> &gt;</div><div class="t " style="left:540px;top:596px">&lt; <span class="rd">H</span><span class="dg">elp</span> &gt;</div><div class="t " style="left:660px;top:596px">&lt; <span class="rd">S</span><span class="dg">ave</span> &gt;</div><div class="t " style="left:780px;top:596px">&lt; <span class="rd">L</span><span class="dg">oad</span> &gt;</div><div class="yb" style="left:209px;top:347px;width:245px;height:117px"></div></div>
<div id="cstatus" class="a"><span style="left:1.5px;letter-spacing:-0.090px">kconfig-mconf_win7.exe*[32]:15324</span><span style="left:673.4px;letter-spacing:0.000px">«</span><span style="left:685.5px;letter-spacing:-0.087px">180206[64]</span><span style="left:771.2px;letter-spacing:0.616px">1/1</span><span style="left:807.7px;letter-spacing:0.469px">[+]</span><span style="left:831.7px;letter-spacing:-0.020px;color:#74828c">NUM</span><span style="left:880.6px;letter-spacing:-1.002px">PRI</span><span style="left:917.5px;letter-spacing:-0.233px">117x31</span><span style="left:978.8px;letter-spacing:-0.272px">(25,18) 25V</span><span style="left:1068.2px;letter-spacing:-0.194px">15148 100%</span><svg class="a" style="left:1138px;top:0" width="32" height="21" viewBox="0 0 32 21"><path d="M8 21 L30 -1 M16 21 L32 5 M24 21 L32 13" stroke="#6c7c84" stroke-width="1" fill="none"/></svg></div>
</body></html>
